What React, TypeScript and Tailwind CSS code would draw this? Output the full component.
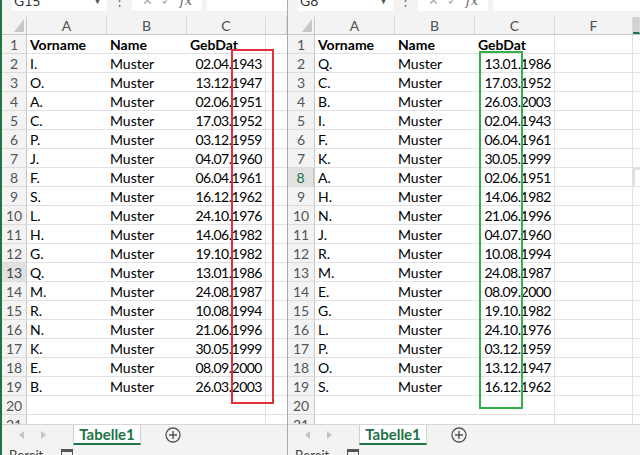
import React from 'react';

type Row = [string, string];

const leftRows: Row[] = [
    ['I.', '02.04.1943'],
    ['O.', '13.12.1947'],
    ['A.', '02.06.1951'],
    ['C.', '17.03.1952'],
    ['P.', '03.12.1959'],
    ['J.', '04.07.1960'],
    ['F.', '06.04.1961'],
    ['S.', '16.12.1962'],
    ['L.', '24.10.1976'],
    ['H.', '14.06.1982'],
    ['G.', '19.10.1982'],
    ['Q.', '13.01.1986'],
    ['M.', '24.08.1987'],
    ['R.', '10.08.1994'],
    ['N.', '21.06.1996'],
    ['K.', '30.05.1999'],
    ['E.', '08.09.2000'],
    ['B.', '26.03.2003'],
];

const rightRows: Row[] = [
    ['Q.', '13.01.1986'],
    ['C.', '17.03.1952'],
    ['B.', '26.03.2003'],
    ['I.', '02.04.1943'],
    ['F.', '06.04.1961'],
    ['K.', '30.05.1999'],
    ['A.', '02.06.1951'],
    ['H.', '14.06.1982'],
    ['N.', '21.06.1996'],
    ['J.', '04.07.1960'],
    ['R.', '10.08.1994'],
    ['M.', '24.08.1987'],
    ['E.', '08.09.2000'],
    ['G.', '19.10.1982'],
    ['L.', '24.10.1976'],
    ['P.', '03.12.1959'],
    ['O.', '13.12.1947'],
    ['S.', '16.12.1962'],
];

interface PaneProps {
    nameBox: string;
    rows: Row[];
    headerWidth: string;
    letters: string[];
    hotRow: number;
    hotGreen?: boolean;
    selectCol?: boolean;
    box: React.ReactNode;
    className: string;
}

function FormulaBar({ nameBox }: { nameBox: string }) {
    return (
        <div className="h-[12px] overflow-hidden bg-[#f3f3f3]">
            <div className="-mt-[10px] flex h-[21px] items-stretch">
                <div className="ml-[10px] flex w-[95px] items-center justify-between bg-white pl-[2px] pr-[5px] text-[14px] text-[#333]">
                    <span>{nameBox}</span>
                    <span className="text-[9px] text-[#555]">▼</span>
                </div>
                <div className="flex w-[25px] items-center justify-center text-[13px] text-[#777]">⋮</div>
                <div className="flex w-[70px] items-center justify-around bg-white px-[6px] text-[13px] text-[#aaa]">
                    <span>✕</span>
                    <span>✓</span>
                    <span className="font-['DejaVu_Serif',serif] italic text-[#666]">fx</span>
                </div>
                <div className="ml-[5px] flex-1 bg-white" />
            </div>
        </div>
    );
}

function TabBar() {
    return (
        <div className="flex h-[23px] items-start border-t border-[#d6d6d6] bg-[#f3f3f3]">
            <div className="flex h-[20px] w-[71px] items-center gap-[15px] pl-[17px]">
                <svg width="6" height="8" viewBox="0 0 6 8"><path d="M5 0 L0 4 L5 8 Z" fill="#c4c4c4" /></svg>
                <svg width="6" height="8" viewBox="0 0 6 8"><path d="M1 0 L6 4 L1 8 Z" fill="#c4c4c4" /></svg>
            </div>
            <div className="flex h-[20px] w-[68px] items-center justify-center border-x border-[#d0d0d0] border-b-2 border-b-[#217346] bg-white text-[15px] font-bold text-[#217346]">
                Tabelle1
            </div>
            <div className="ml-[24px] flex h-[20px] items-center">
                <svg width="16" height="16" viewBox="0 0 16 16">
                    <circle cx="8" cy="8" r="7" fill="none" stroke="#555" strokeWidth="1.3" />
                    <path d="M8 4 V12 M4 8 H12" stroke="#555" strokeWidth="1.4" />
                </svg>
            </div>
        </div>
    );
}

function StatusBar() {
    return (
        <div className="h-[8px] overflow-hidden bg-[#f3f3f3]">
            <div className="flex items-start gap-[18px] pl-[7px] pt-[1px]">
                <span className="text-[13px] leading-[14px] text-[#444]">Bereit</span>
                <div className="mt-[1px] h-[12px] w-[12px] border-[1.5px] border-[#555] border-t-[3px]" />
            </div>
        </div>
    );
}

function Pane({ nameBox, rows, headerWidth, letters, hotRow, hotGreen, selectCol, box, className }: PaneProps) {
    const lines = Array.from({ length: 21 }, (_, i) => i + 1);
    return (
        <div className={`relative flex h-[455px] flex-col overflow-hidden ${className}`}>
            <FormulaBar nameBox={nameBox} />
            <div className="h-[5px] bg-[#f3f3f3]" />
            <div className="flex h-[18px] border-b border-[#c8c8c8] bg-[#f3f3f3] text-[14px] text-[#505050]">
                <div className={`relative ${headerWidth} shrink-0 border-r border-[#c8c8c8]`}>
                    <svg className="absolute bottom-[2px] right-[2px]" width="10" height="13" viewBox="0 0 10 13">
                        <path d="M10 0 L10 13 L0 13 Z" fill="#c8c8c8" />
                    </svg>
                </div>
                {letters.map((l, i) => (
                    <div
                        key={l}
                        className={`flex shrink-0 items-center justify-center border-r border-[#dadada] leading-none ${
                            i === letters.length - 1 ? 'flex-1' : i === 2 && !selectCol ? 'w-[79px]' : i === 3 && selectCol ? 'w-[78px]' : 'w-[80px]'
                        } ${selectCol && i === letters.length - 1 ? 'border-b-2 border-b-[#217346] bg-[#d2d2d2]' : ''}`}
                    >
                        {l}
                    </div>
                ))}
            </div>
            <div className="h-[389px] overflow-hidden text-[14px] text-black">
                {lines.map((n) => {
                    const data = n >= 2 && n <= 19 ? rows[n - 2] : null;
                    const isHead = n === 1;
                    const hot = n === hotRow;
                    return (
                        <div key={n} className="flex h-[19px]">
                            <div
                                className={`flex ${headerWidth} shrink-0 items-center justify-center border-b border-r border-[#dcdcdc] border-r-[#c8c8c8] ${
                                    hot ? (hotGreen ? 'border-r-2 border-r-[#217346] bg-[#e1e1e1] text-[#217346]' : 'bg-[#e1e1e1] text-[#444]') : 'bg-[#f3f3f3] text-[#555]'
                                }`}
                            >
                                {n}
                            </div>
                            <div className={`flex w-[80px] shrink-0 items-center border-b border-[#e1e1e1] px-[3px] ${isHead ? 'font-bold' : ''}`}>
                                {isHead ? 'Vorname' : data ? data[0] : ''}
                            </div>
                            <div className={`flex w-[80px] shrink-0 items-center border-b border-[#e1e1e1] px-[3px] ${isHead ? 'font-bold' : ''}`}>
                                {isHead ? 'Name' : data ? 'Muster' : ''}
                            </div>
                            <div
                                className={`flex ${selectCol ? 'w-[80px]' : 'w-[79px]'} shrink-0 items-center border-b border-r border-[#e1e1e1] px-[3px] ${
                                    isHead ? 'justify-start font-bold' : 'justify-end tracking-[-0.5px]'
                                }`}
                            >
                                {isHead ? 'GebDat' : data ? data[1] : ''}
                            </div>
                            {selectCol && <div className="w-[78px] shrink-0 border-b border-r border-[#e1e1e1]" />}
                            <div
                                className={`flex-1 border-b border-[#e1e1e1] ${
                                    selectCol && hot ? 'border-2 border-r-0 border-[#217346]' : ''
                                }`}
                            />
                        </div>
                    );
                })}
            </div>
            <TabBar />
            <StatusBar />
            {box}
        </div>
    );
}

export default function App() {
    return (
        <div className="flex h-[455px] w-[640px] overflow-hidden bg-white font-['Lato',sans-serif]">
            <Pane
                nameBox="G15"
                rows={leftRows}
                headerWidth="w-[25px]"
                letters={['A', 'B', 'C', '']}
                hotRow={13}
                className="w-[287px] shrink-0 border-l-2 border-[#217346]"
                box={<div className="absolute left-[229px] top-[49px] h-[355px] w-[43px] border-2 border-[#e0303c]" />}
            />
            <div className="w-[1px] shrink-0 bg-[#a9a9a9]" />
            <Pane
                nameBox="G8"
                rows={rightRows}
                headerWidth="w-[27px]"
                letters={['A', 'B', 'C', 'F', '']}
                hotRow={8}
                hotGreen
                selectCol
                className="flex-1"
                box={<div className="absolute left-[191px] top-[51px] h-[358px] w-[44px] border-2 border-[#33b04b]" />}
            />
        </div>
    );
}
